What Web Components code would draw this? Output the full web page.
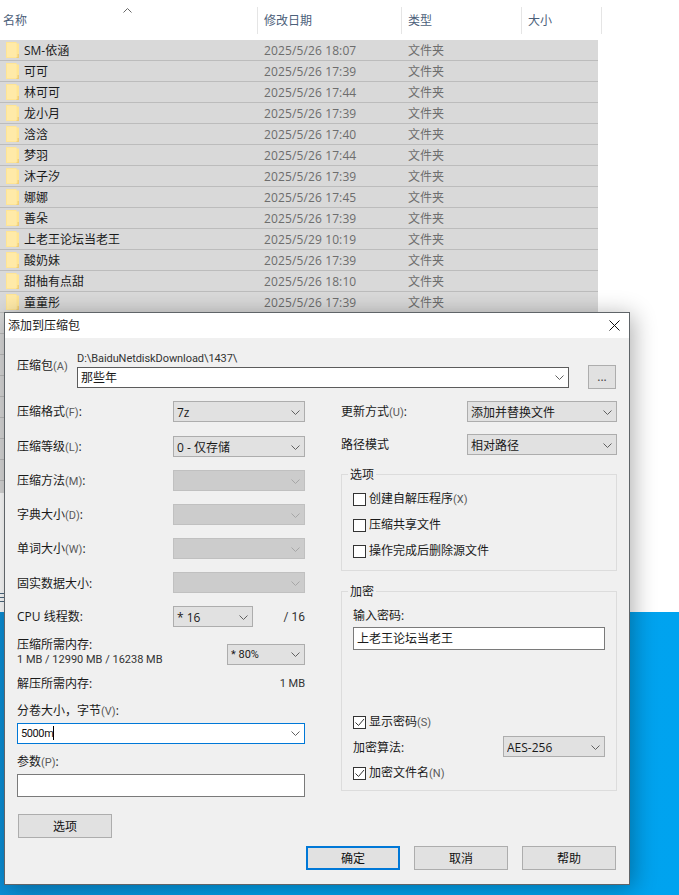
<!DOCTYPE html>
<html lang="zh">
<head>
<meta charset="utf-8">
<title>添加到压缩包</title>
<style>
html, body { margin: 0; height: 100%; }
body {
  width: 679px; height: 895px; overflow: hidden; position: relative;
  display: flex; flex-direction: column;
  font: 12px/16px "Open Sans", "Noto Sans CJK SC", sans-serif;
  color: #1a1a1a;
}
</style>
</head>
<body>
<file-list></file-list>
<desk-top></desk-top>
<archive-dialog></archive-dialog>

<script>
const CHEVRON = `<svg width="9" height="5" viewBox="0 0 9 5"><path d="M.5.5l4 4 4-4" fill="none" stroke="currentColor"/></svg>`;

class FileRow extends HTMLElement {
  constructor() {
    super();
    this.shadowDOM = this.attachShadow({mode: "open"});
  }
  connectedCallback() {
    const name = this.getAttribute("name");
    const date = this.getAttribute("date");
    this.shadowDOM.innerHTML = `<style>
:host { display: flex; box-sizing: border-box; height: 21px; width: 598px; background: #d9d9d9; border-bottom: 1px solid #bcbcbc; line-height: 22px; color: #6d6d6d; }
svg { margin: 2px 5px 0 6px; flex: none; }
.name { width: 240px; color: #1a1a1a; }
.date { width: 144px; letter-spacing: .12px; }
</style>
${name ? `<svg width="13" height="16" viewBox="0 0 13 16"><path d="M0 0h10.5v1.5H13V16H0z" fill="#ffe594"/><path d="M1 1h9.5v14H1z" fill="#ffeaa8"/><path d="M11.5 12H13v4h-2.5v-1h1z" fill="#f1cf78"/></svg>
<span class="name">${name}</span><span class="date">${date}</span><span>文件夹</span>` : ""}`;
  }
}
customElements.define("file-row", FileRow);

class FileList extends HTMLElement {
  constructor() {
    super();
    this.shadowDOM = this.attachShadow({mode: "open"});
  }
  connectedCallback() {
    const files = [
      ["SM-依涵", "2025/5/26 18:07"], ["可可", "2025/5/26 17:39"], ["林可可", "2025/5/26 17:44"],
      ["龙小月", "2025/5/26 17:39"], ["浛浛", "2025/5/26 17:40"], ["梦羽", "2025/5/26 17:44"],
      ["沐子汐", "2025/5/26 17:39"], ["娜娜", "2025/5/26 17:45"], ["善朵", "2025/5/26 17:39"],
      ["上老王论坛当老王", "2025/5/29 10:19"], ["酸奶妹", "2025/5/26 17:39"], ["甜柚有点甜", "2025/5/26 18:10"],
      ["童童彤", "2025/5/26 17:39"]
    ];
    let rows = files.map(f => `<file-row name="${f[0]}" date="${f[1]}"></file-row>`).join("");
    // the rows behind the dialog have nothing readable
    for (let i = 0; i < 9; i++) rows += `<file-row></file-row>`;
    this.shadowDOM.innerHTML = `<style>
:host { display: flex; flex-direction: column; height: 612px; flex: none; background: #fff; overflow: hidden; }
.head { display: flex; height: 27px; margin: 7px 0 6px; color: #4c607a; line-height: 28px; position: relative; }
.head span { box-sizing: border-box; border-right: 1px solid #e5e5e5; padding-left: 6px; }
.head span:first-child { width: 258px; padding-left: 3px; }
.head span:nth-child(2) { width: 144px; }
.head span:nth-child(3) { width: 120px; }
.head span:nth-child(4) { width: 80px; }
.sort { position: absolute; left: 123px; top: 1px; color: #666; }
.rows { height: 453px; overflow: hidden; }
.menu { margin-top: 100px; width: 5px; height: 11px; background: repeating-linear-gradient(#4d6a80 0 1px, transparent 1px 4px); }
</style>
<div class="head"><span>名称</span><span>修改日期</span><span>类型</span><span>大小</span>
<svg class="sort" width="9" height="5" viewBox="0 0 9 5"><path d="M.5 4.5l4-4 4 4" fill="none" stroke="currentColor"/></svg></div>
<div class="rows">${rows}</div>
<div class="menu"></div>`;
  }
}
customElements.define("file-list", FileList);

class DeskTop extends HTMLElement {
  constructor() {
    super();
    this.attachShadow({mode: "open"}).innerHTML = `<style>
:host { display: block; flex: 1; background: linear-gradient(90deg, #0b8fd7 0, #00a0ea 40%, #00a3ef 100%); }
</style>`;
  }
}
customElements.define("desk-top", DeskTop);

class UiCombo extends HTMLElement {
  constructor() {
    super();
    this.shadowDOM = this.attachShadow({mode: "open"});
  }
  connectedCallback() {
    this.shadowDOM.innerHTML = `<style>
:host { display: flex; align-items: center; box-sizing: border-box; height: 21px; padding: 2px 3px 0 3px; background: #e1e1e1; border: 1px solid #adadad; flex: none; }
:host([disabled]) { background: #ccc; border-color: #c0c0c0; }
:host([disabled]) .arrow { color: #a6a6a6; }
:host([editable]) { background: #fff; border-color: #5c5c5c; padding-top: 0; }
:host([focused]) { background: #fff; border-color: #0078d7; }
.value { flex: 1; white-space: nowrap; overflow: hidden; }
.arrow { color: #606060; display: flex; margin-right: 1px; }
</style>
<span class="value"><slot></slot></span><span class="arrow">${CHEVRON}</span>`;
  }
}
customElements.define("ui-combo", UiCombo);

class UiCheck extends HTMLElement {
  constructor() {
    super();
    this.shadowDOM = this.attachShadow({mode: "open"});
  }
  connectedCallback() {
    const mark = this.hasAttribute("checked")
      ? `<path d="M2.5 6.5l3 3 5.5-6.5" fill="none" stroke="#333"/>` : "";
    this.shadowDOM.innerHTML = `<style>
:host { display: flex; align-items: center; height: 14px; gap: 3px; }
svg { flex: none; }
</style>
<svg width="13" height="13" viewBox="0 0 13 13"><rect x=".5" y=".5" width="12" height="12" fill="#fff" stroke="#333"/>${mark}</svg><span><slot></slot></span>`;
  }
}
customElements.define("ui-check", UiCheck);

class UiButton extends HTMLElement {
  constructor() {
    super();
    this.attachShadow({mode: "open"}).innerHTML = `<style>
:host { display: flex; align-items: center; justify-content: center; box-sizing: border-box; width: 94px; height: 24px; padding-top: 2px; background: #e1e1e1; border: 1px solid #adadad; flex: none; color: #111; }
:host([primary]) { border: 2px solid #0078d7; }
</style><slot></slot>`;
  }
}
customElements.define("ui-button", UiButton);

class UiGroup extends HTMLElement {
  constructor() {
    super();
    this.shadowDOM = this.attachShadow({mode: "open"});
  }
  connectedCallback() {
    this.shadowDOM.innerHTML = `<style>
:host { display: block; }
fieldset { box-sizing: border-box; height: 100%; margin: 0; padding: 0 11px; border: 1px solid #dcdcdc; min-width: 0; }
legend { padding: 2px 2px 0; margin-left: -5px; line-height: 16px; }
</style>
<fieldset><legend>${this.getAttribute("title")}</legend><slot></slot></fieldset>`;
  }
}
customElements.define("ui-group", UiGroup);

class ArchiveDialog extends HTMLElement {
  constructor() {
    super();
    this.shadowDOM = this.attachShadow({mode: "open"});
  }
  connectedCallback() {
    this.shadowDOM.innerHTML = `<style>
:host { position: absolute; left: 4px; top: 312px; width: 626px; height: 573px; box-sizing: border-box; border: 1px solid #5f6468; background: #f0f0f0; box-shadow: 3px 3px 22px rgba(0,0,0,.32); display: flex; flex-direction: column; }
.title { display: flex; align-items: center; justify-content: space-between; height: 25px; flex: none; background: #fff; padding: 0 9px 0 3px; }
.title svg { display: block; }
.m, .num, .where, .small { font-family: Roboto, "Noto Sans CJK SC", sans-serif; font-size: 11px; }
.m { color: #5a5a5a; }
.top { display: flex; height: 39px; margin: 14px 13px 0 12px; }
.top .label { width: 60px; padding-top: 6px; }
.path { width: 492px; }
.path .where { display: block; height: 12px; line-height: 14px; color: #333; letter-spacing: -.07px; }
.path ui-combo { margin-top: 3px; }
.more { margin: 13px 0 0 19px; width: 28px; height: 24px; color: #444; padding-top: 0; }
.main { display: flex; justify-content: space-between; margin: 10px 12px 0 12px; height: 437px; }
.left { width: 288px; display: flex; flex-direction: column; }
.right { width: 276px; display: flex; flex-direction: column; }
.row { display: flex; align-items: center; justify-content: space-between; height: 21px; flex: none; margin-bottom: 13px; }
.row > .t { padding-top: 2px; }
.row.wide { margin-bottom: 14px; }
.row.cpu { margin-bottom: 10px; }
.cpu .fix { flex: 1; display: flex; justify-content: space-between; align-items: center; }
.left .row ui-combo { width: 132px; }
.left .row.cpu ui-combo { width: 80px; }
.num { color: #333; }
.mem { display: flex; justify-content: space-between; height: 30px; flex: none; }
.mem .two { line-height: 15px; }
.mem .num { display: block; height: 15px; }
.mem ui-combo { width: 78px; margin-top: 7px; padding-top: 0; }
.free { display: flex; justify-content: space-between; margin-top: 9px; height: 16px; flex: none; }
.lbl { height: 16px; flex: none; }
.vol { margin-top: 11px; }
.vol-box { width: 288px; margin-top: 4px; padding-top: 0; }
.par { margin-top: 10px; }
.field { box-sizing: border-box; height: 23px; background: #fff; border: 1px solid #7a7a7a; line-height: 21px; padding-left: 3px; flex: none; }
.par-box { margin-top: 4px; }
.opt { margin: 17px 0 0 1px; }
.caret { display: inline-block; width: 1px; height: 14px; background: #000; vertical-align: -3px; }
.typed { letter-spacing: -.4px; }
.right .row { margin-bottom: 12px; }
.right .row ui-combo { width: 150px; }
.right .row.path-mode { margin-bottom: 10px; }
.g1 { height: 106px; flex: none; }
.g1 .list { display: flex; flex-direction: column; gap: 12px; padding-top: 9px; }
.g2 { height: 209px; margin-top: 11px; flex: none; }
.g2 .pad { padding-top: 8px; display: flex; flex-direction: column; }
.g2 .field { width: 252px; margin-top: 3px; }
.g2 .show { margin-top: 65px; }
.g2 .row { margin: 7px 0 9px; }
.g2 .row ui-combo { width: 102px; }
.actions { display: flex; justify-content: flex-end; gap: 14px; margin: 8px 13px 0 0; }
</style>
<div class="title"><span>添加到压缩包</span>
<svg width="11" height="11" viewBox="0 0 11 11"><path d="M.5.5l10 10M10.5.5l-10 10" stroke="#111" fill="none"/></svg></div>

<div class="top">
  <span class="label">压缩包<span class="m">(A)</span></span>
  <div class="path"><span class="where">D:\\BaiduNetdiskDownload\\1437\\</span><ui-combo editable>那些年</ui-combo></div>
  <ui-button class="more">...</ui-button>
</div>

<div class="main">
  <div class="left">
    <div class="row wide"><span class="t">压缩格式<span class="m">(F)</span>:</span><ui-combo>7z</ui-combo></div>
    <div class="row"><span class="t">压缩等级<span class="m">(L)</span>:</span><ui-combo>0 - 仅存储</ui-combo></div>
    <div class="row"><span class="t">压缩方法<span class="m">(M)</span>:</span><ui-combo disabled></ui-combo></div>
    <div class="row"><span class="t">字典大小<span class="m">(D)</span>:</span><ui-combo disabled></ui-combo></div>
    <div class="row"><span class="t">单词大小<span class="m">(W)</span>:</span><ui-combo disabled></ui-combo></div>
    <div class="row"><span class="t">固实数据大小:</span><ui-combo disabled></ui-combo></div>
    <div class="row cpu"><span style="width:156px;flex:none">CPU 线程数:</span><span class="fix"><ui-combo>* 16</ui-combo><span class="num" style="font-size:12px">/ 16</span></span></div>
    <div class="mem"><span class="two">压缩所需内存:<span class="num">1 MB / 12990 MB / 16238 MB</span></span><ui-combo><span class="small">* 80%</span></ui-combo></div>
    <div class="free"><span>解压所需内存:</span><span class="num">1 MB</span></div>
    <div class="lbl vol">分卷大小，字节<span class="m">(V)</span>:</div>
    <ui-combo focused class="vol-box"><span><span class="small typed" style="color:#111">5000m</span><span class="caret"></span></span></ui-combo>
    <div class="lbl par">参数<span class="m">(P)</span>:</div>
    <div class="field par-box"></div>
    <ui-button class="opt">选项</ui-button>
  </div>
  <div class="right">
    <div class="row"><span class="t">更新方式<span class="m">(U)</span>:</span><ui-combo>添加并替换文件</ui-combo></div>
    <div class="row path-mode"><span>路径模式</span><ui-combo>相对路径</ui-combo></div>
    <ui-group class="g1" title="选项"><div class="list">
      <ui-check>创建自解压程序<span class="m">(X)</span></ui-check>
      <ui-check>压缩共享文件</ui-check>
      <ui-check>操作完成后删除源文件</ui-check>
    </div></ui-group>
    <ui-group class="g2" title="加密"><div class="pad">
      <div class="lbl">输入密码:</div>
      <div class="field">上老王论坛当老王</div>
      <ui-check class="show" checked>显示密码<span class="m">(S)</span></ui-check>
      <div class="row"><span class="t">加密算法:</span><ui-combo>AES-256</ui-combo></div>
      <ui-check checked>加密文件名<span class="m">(N)</span></ui-check>
    </div></ui-group>
  </div>
</div>

<div class="actions"><ui-button primary>确定</ui-button><ui-button>取消</ui-button><ui-button>帮助</ui-button></div>`;
  }
}
customElements.define("archive-dialog", ArchiveDialog);
</script>
</body>
</html>
